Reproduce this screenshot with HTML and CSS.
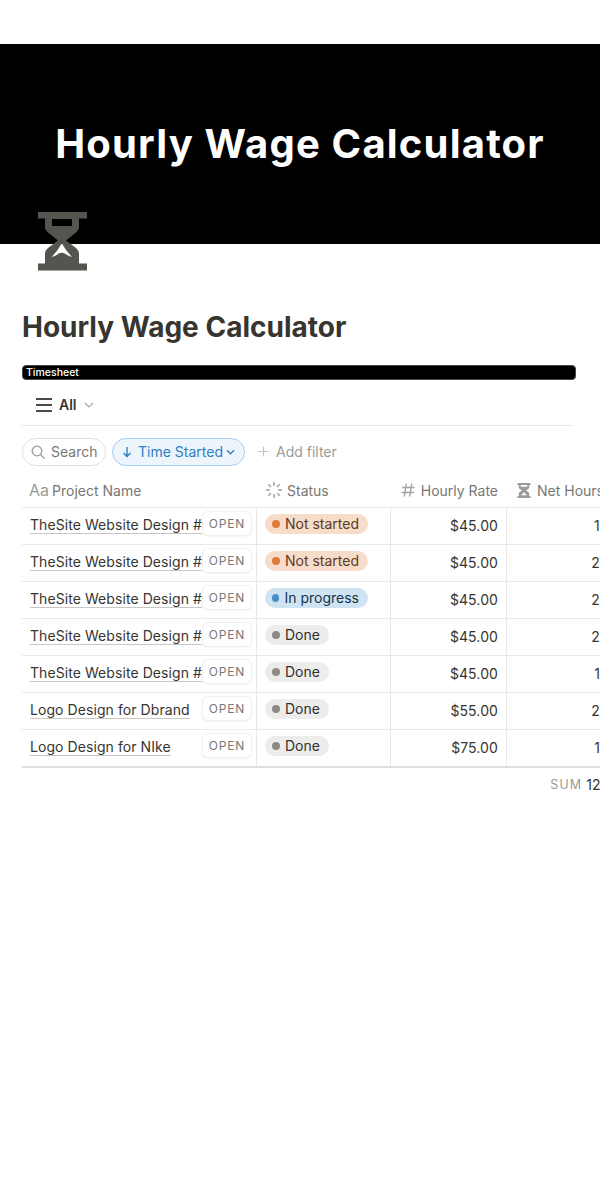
FILE: index.html
```html
<!DOCTYPE html>
<html lang="en">
<head>
<meta charset="utf-8">
<title>Hourly Wage Calculator</title>
<link rel="stylesheet" href="styles.css">
</head>
<body>
<div class="page">
  <header class="cover"><span class="cover-title">Hourly Wage Calculator</span></header>
  <svg class="page-icon" viewBox="0 0 49 59" width="49" height="59" aria-hidden="true">
    <path fill="#55544f" fill-rule="evenodd" d="M0 0H49V6.500H41V15C41 17 40 18.500 38 20.500L28 28.500L38 36C40 38 41 39.500 41 42V51.500H49V58.500H0V51.500H7V42C7 39.500 8 38 10 36L20 28.500L10 20.500C8 18.500 7 17 7 15V6.500H0ZM14 7V14H34V7ZM23.800 31C21 36 18 41 13.700 44.700C18 44.700 20 40.700 23.800 40.700C27.500 40.700 30 44.700 33.900 44.700C30 41 26.500 36 23.800 31Z"/>
  </svg>
  <main class="content">
    <h1 class="title">Hourly Wage Calculator</h1>
    <div class="banner">Timesheet</div>
    <div class="tabs">
      <div class="tab">
        <svg class="tab-icon" viewBox="0 0 16 14" width="16" height="14"><path d="M0 1H16M0 7H16M0 13H16" stroke="#4a4945" stroke-width="2" fill="none"/></svg>
        <span>All</span>
        <svg viewBox="0 0 10 6" width="10" height="6"><path d="M1 1L5 5L9 1" stroke="#aaa9a5" stroke-width="1.200" fill="none"/></svg>
      </div>
    </div>
    <div class="filters">
      <div class="pill search">
        <svg viewBox="0 0 14 14" width="14" height="14"><circle cx="6" cy="6" r="4.800" stroke="#9b9a97" stroke-width="1.300" fill="none"/><path d="M9.500 9.500L13.500 13.500" stroke="#9b9a97" stroke-width="1.300"/></svg>
        <span>Search</span>
      </div>
      <div class="pill sort">
        <svg viewBox="0 0 10 12" width="10" height="12"><path d="M5 1V10.500M1.500 7L5 10.500L8.500 7" stroke="#2e7fc2" stroke-width="1.400" fill="none"/></svg>
        <span>Time Started</span>
        <svg viewBox="0 0 10 6" width="9" height="6"><path d="M1 1L5 5L9 1" stroke="#2e7fc2" stroke-width="1.400" fill="none"/></svg>
      </div>
      <div class="add-filter">
        <svg viewBox="0 0 11 11" width="11" height="11"><path d="M5.500 0.500V10.500M0.500 5.500H10.500" stroke="#c4c3c0" stroke-width="1.200"/></svg>
        <span>Add filter</span>
      </div>
    </div>
    <div class="table">
      <div class="row head">
        <div class="cell c1 h-name"><span class="aa">Aa</span><span>Project Name</span></div>
        <div class="cell c2 h"><svg viewBox="0 0 18 18" width="18" height="18"><path d="M9 1V5M9 13V17M1 9H5M13 9H17M3.300 3.300L6 6M12 12L14.700 14.700M14.700 3.300L12 6M6 12L3.300 14.700" stroke="#a5a4a0" stroke-width="1.600" fill="none"/></svg><span>Status</span></div>
        <div class="cell c3 h"><svg viewBox="0 0 14 14" width="14" height="14"><path d="M5.300 0.500L3.300 13.500M10.700 0.500L8.700 13.500M1 4.500H13.500M0.500 9.500H13" stroke="#a5a4a0" stroke-width="1.400" fill="none"/></svg><span>Hourly Rate</span></div>
        <div class="cell c4 h"><svg viewBox="0 0 14 16" width="14" height="15"><path fill="#9b9a97" fill-rule="evenodd" d="M0 0H14V2H12.500V4.500C12.500 6 11 7 9 8C11 9 12.500 10 12.500 11.500V14H14V16H0V14H1.500V11.500C1.500 10 3 9 5 8C3 7 1.500 6 1.500 4.500V2H0ZM3.500 2V4H10.500V2ZM7 9.500C6 11 4.500 12.500 3.500 13H10.500C9.500 12.500 8 11 7 9.500Z"/></svg><span>Net Hours</span></div>
      </div>
      <div class="row">
        <div class="cell c1"><span class="name">TheSite Website Design #</span><span class="open">OPEN</span></div>
        <div class="cell c2"><span class="tag orange"><i></i>Not started</span></div>
        <div class="cell c3 num">$45.00</div>
        <div class="cell c4 num">18.00</div>
      </div>
      <div class="row">
        <div class="cell c1"><span class="name">TheSite Website Design #</span><span class="open">OPEN</span></div>
        <div class="cell c2"><span class="tag orange"><i></i>Not started</span></div>
        <div class="cell c3 num">$45.00</div>
        <div class="cell c4 num">20.00</div>
      </div>
      <div class="row">
        <div class="cell c1"><span class="name">TheSite Website Design #</span><span class="open">OPEN</span></div>
        <div class="cell c2"><span class="tag blue"><i></i>In progress</span></div>
        <div class="cell c3 num">$45.00</div>
        <div class="cell c4 num">20.00</div>
      </div>
      <div class="row">
        <div class="cell c1"><span class="name">TheSite Website Design #</span><span class="open">OPEN</span></div>
        <div class="cell c2"><span class="tag gray"><i></i>Done</span></div>
        <div class="cell c3 num">$45.00</div>
        <div class="cell c4 num">20.00</div>
      </div>
      <div class="row">
        <div class="cell c1"><span class="name">TheSite Website Design #</span><span class="open">OPEN</span></div>
        <div class="cell c2"><span class="tag gray"><i></i>Done</span></div>
        <div class="cell c3 num">$45.00</div>
        <div class="cell c4 num">15.00</div>
      </div>
      <div class="row">
        <div class="cell c1"><span class="name">Logo Design for Dbrand</span><span class="open">OPEN</span></div>
        <div class="cell c2"><span class="tag gray"><i></i>Done</span></div>
        <div class="cell c3 num">$55.00</div>
        <div class="cell c4 num">20.00</div>
      </div>
      <div class="row last">
        <div class="cell c1"><span class="name">Logo Design for NIke</span><span class="open">OPEN</span></div>
        <div class="cell c2"><span class="tag gray"><i></i>Done</span></div>
        <div class="cell c3 num">$75.00</div>
        <div class="cell c4 num">13.00</div>
      </div>
      <div class="sum-row"><span class="sum-label">SUM</span><span class="sum-value">126.00</span></div>
    </div>
  </main>
</div>
</body>
</html>
```
FILE: styles.css
```css
* { box-sizing: border-box; }
html, body { margin: 0; padding: 0; background: #fff; }
body { font-family: Inter, "Liberation Sans", sans-serif; color: #37352f; }
.page { width: 600px; height: 1200px; overflow: hidden; padding-top: 44px; }
.cover { height: 200px; background: #000; display: flex; align-items: center; justify-content: center; padding-bottom: 2px; }
.cover-title { color: #fff; font-size: 40px; font-weight: 700; letter-spacing: 1.200px; white-space: nowrap; }
.page-icon { display: block; margin: -32px 0 0 38px; position: relative; }
.content { padding-left: 22px; }
.title { margin: 38px 0 0; font-size: 28px; line-height: 36px; font-weight: 700; color: #37352f; }
.banner { margin-top: 20px; width: 554px; height: 15px; border-radius: 4px; background: #000; border: 1px solid #444; color: #fff; font-size: 10.500px; line-height: 13px; padding-left: 3px; font-weight: 500; }
.tabs { width: 552px; height: 46px; border-bottom: 1px solid #e9e9e7; display: flex; align-items: center; padding: 4px 0 0 14px; }
.tab { display: flex; align-items: center; gap: 7px; font-size: 14px; font-weight: 600; }
.filters { display: flex; align-items: center; gap: 6px; margin-top: 12px; height: 28px; font-size: 14px; }
.pill { height: 28px; border-radius: 14px; display: flex; align-items: center; border: 1px solid #e3e2e0; padding-bottom: 1px; }
.search { width: 84px; padding-left: 8px; gap: 6px; color: #787774; }
.sort { width: 133px; padding-left: 9px; gap: 6px; border-color: #a7cdf0; background: #edf5fc; color: #2e7fc2; }
.sort span { margin-right: -3px; }
.add-filter { display: flex; align-items: center; gap: 8px; margin-left: 7px; color: #9b9a97; padding-bottom: 1px; }
.add-filter span { margin-left: -1px; }
.table { margin-top: 11px; width: 616px; }
.row { display: flex; height: 37px; border-bottom: 1px solid #e9e9e7; font-size: 14px; }
.row.head { height: 31px; color: #787774; }
.row.last { border-bottom-color: #dfdfdd; border-bottom-width: 2px; height: 38px; }
.cell { display: flex; align-items: center; padding: 0 8px 2px; border-right: 1px solid #e9e9e7; }
.head .cell { border-right: none; padding-bottom: 4px; }
.c1 { width: 235px; position: relative; }
.c2 { width: 134px; }
.c3 { width: 116px; }
.c4 { width: 131px; border-right: none; }
.h { gap: 4px; }
.c3.h { justify-content: flex-end; gap: 6px; padding-right: 9px; }
.c4.h { padding-left: 10px; gap: 6px; white-space: nowrap; }
.h-name { gap: 3px; padding-left: 7px; }
.aa { font-size: 16px; color: #9b9a97; }
.num { justify-content: flex-end; letter-spacing: .1px; }
.name { white-space: nowrap; border-bottom: 1px solid #c8c7c4; line-height: 17px; letter-spacing: .07px; }
.open { position: absolute; left: 181px; top: 4px; height: 23px; width: 48px; background: #fff; border-radius: 5px; box-shadow: 0 0 0 1px #efefed, 0 1px 3px rgba(15, 15, 15, .08); font-size: 12px; font-weight: 400; letter-spacing: .8px; color: #787774; display: flex; align-items: center; justify-content: center; padding-bottom: 1px; }
.tag { height: 20px; border-radius: 10px; display: inline-flex; align-items: center; padding: 0 9px 1px 7px; gap: 5px; white-space: nowrap; margin-top: -2px; }
.tag i { width: 8px; height: 8px; border-radius: 50%; }
.orange { background: #f6dcc9; color: #5c3b23; }
.orange i { background: #e07b39; }
.blue { background: #cfe4f3; color: #183347; width: 103px; }
.blue i { background: #4a90c4; }
.gray { background: #ececeb; color: #32302c; }
.gray i { background: #8e8b86; }
.sum-row { display: flex; align-items: center; justify-content: flex-end; height: 32px; padding: 0 8px 0 0; gap: 4px; }
.sum-label { font-size: 12.500px; letter-spacing: 1.100px; color: #9b9a97; }
.sum-value { font-size: 14px; }
```
